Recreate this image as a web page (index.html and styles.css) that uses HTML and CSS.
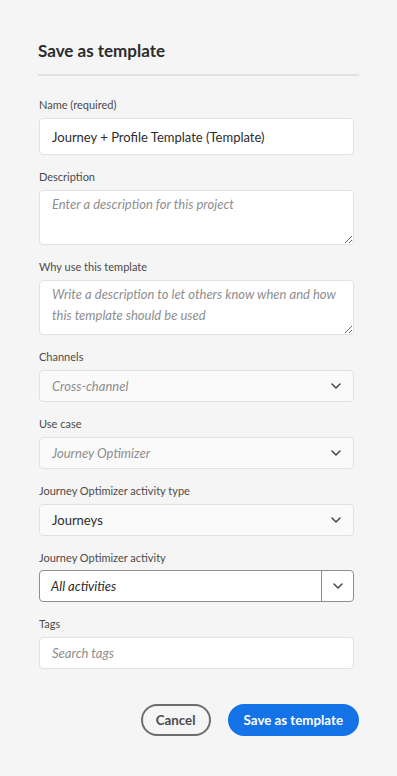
FILE: index.html
```html
<!DOCTYPE html>
<html lang="en">
<head>
    <meta charset="UTF-8">
    <meta name="viewport" content="width=device-width, initial-scale=1.0">
    <title>Save as template</title>
    <link rel="stylesheet" href="styles.css">
</head>
<body>
    <div class="dialog">
        <h2 class="title">Save as template</h2>
        <hr class="divider">

        <div class="field">
            <label>Name (required)</label>
            <input type="text" class="text-input tall" value="Journey + Profile Template (Template)">
        </div>

        <div class="field">
            <label>Description</label>
            <textarea class="text-area" placeholder="Enter a description for this project"></textarea>
        </div>

        <div class="field">
            <label>Why use this template</label>
            <textarea class="text-area" placeholder="Write a description to let others know when and how this template should be used"></textarea>
        </div>

        <div class="field">
            <label>Channels</label>
            <div class="picker placeholder">
                <span>Cross-channel</span>
                <svg class="chevron" width="10" height="6" viewBox="0 0 10 6"><path d="M1 1l4 4 4-4" fill="none" stroke="#4b4b4b" stroke-width="1.6" stroke-linecap="round" stroke-linejoin="round"/></svg>
            </div>
        </div>

        <div class="field">
            <label>Use case</label>
            <div class="picker placeholder">
                <span>Journey Optimizer</span>
                <svg class="chevron" width="10" height="6" viewBox="0 0 10 6"><path d="M1 1l4 4 4-4" fill="none" stroke="#4b4b4b" stroke-width="1.6" stroke-linecap="round" stroke-linejoin="round"/></svg>
            </div>
        </div>

        <div class="field">
            <label>Journey Optimizer activity type</label>
            <div class="picker">
                <span>Journeys</span>
                <svg class="chevron" width="10" height="6" viewBox="0 0 10 6"><path d="M1 1l4 4 4-4" fill="none" stroke="#4b4b4b" stroke-width="1.6" stroke-linecap="round" stroke-linejoin="round"/></svg>
            </div>
        </div>

        <div class="field">
            <label>Journey Optimizer activity</label>
            <div class="combobox">
                <span class="combo-value">All activities</span>
                <span class="combo-button">
                    <svg width="10" height="6" viewBox="0 0 10 6"><path d="M1 1l4 4 4-4" fill="none" stroke="#4b4b4b" stroke-width="1.6" stroke-linecap="round" stroke-linejoin="round"/></svg>
                </span>
            </div>
        </div>

        <div class="field">
            <label>Tags</label>
            <input type="text" class="text-input" placeholder="Search tags">
        </div>

        <div class="actions">
            <button class="btn secondary">Cancel</button>
            <button class="btn primary">Save as template</button>
        </div>
    </div>
</body>
</html>
```

FILE: styles.css
```css
body { margin: 0; background: #f5f5f5; font-family: Lato, "Open Sans", sans-serif; color: #2c2c2c; }
.dialog { padding: 39px 38px 0 38px; }
.title { margin: 0; font-size: 17px; font-weight: 700; line-height: 24px; color: #2c2c2c; }
.divider { margin: 11px 0 21px 0; border: none; height: 2px; background: #e1e1e1; }

.field { width: 315px; margin-left: 1px; margin-bottom: 14px; }
.field label { display: block; font-size: 11px; line-height: 16px; color: #4b4b4b; margin-bottom: 5px; }

.text-input, .text-area { display: block; box-sizing: border-box; width: 100%; border: 1px solid #e1e1e1; border-radius: 4px; background: #fff; font-family: inherit; font-size: 13px; color: #2c2c2c; padding: 0 12px; outline: none; }
.text-input { height: 32px; }
.text-input.tall { height: 37px; }
.text-area { height: 55px; padding: 3px 12px; line-height: 21px; resize: vertical; }
.text-input::placeholder, .text-area::placeholder { color: #8e8e8e; font-style: italic; }

.picker { box-sizing: border-box; height: 32px; display: flex; align-items: center; justify-content: space-between; padding: 0 12px 0 12px; background: #fafafa; border: 1px solid #e1e1e1; border-radius: 4px; font-size: 13px; color: #2c2c2c; }
.picker.placeholder span { color: #8e8e8e; font-style: italic; }

.combobox { box-sizing: border-box; height: 32px; display: flex; background: #fff; border: 1px solid #8e8e8e; border-radius: 4px; font-size: 13px; margin-top: -1px; }
.combo-value { flex: 1; display: flex; align-items: center; padding-left: 11px; font-style: italic; color: #2c2c2c; }
.combo-button { width: 31px; display: flex; align-items: center; justify-content: center; border-left: 1px solid #8e8e8e; }

.actions { display: flex; justify-content: flex-end; gap: 17px; margin-top: 35px; }
.btn { height: 32px; border-radius: 16px; font-family: inherit; font-size: 13.3px; font-weight: 700; padding: 0 14px; cursor: pointer; }
.btn.secondary { background: transparent; border: 2px solid #6e6e6e; color: #4b4b4b; width: 70px; padding: 0; }
.btn.primary { background: #1473e6; border: 2px solid #1473e6; color: #fff; }
```
